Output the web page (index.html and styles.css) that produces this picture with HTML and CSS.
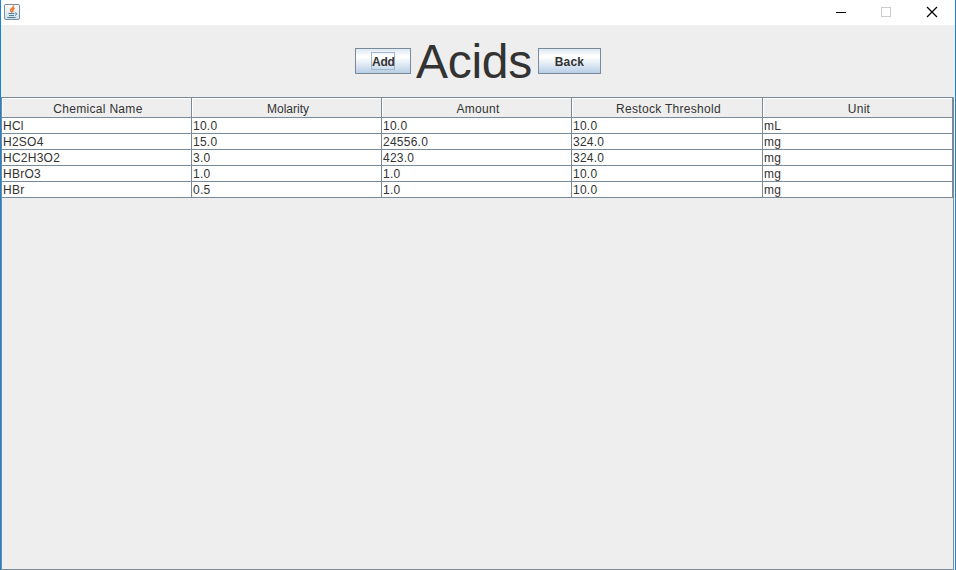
FILE: index.html
```html
<!DOCTYPE html>
<html lang="en">
<head>
<meta charset="utf-8">
<title>Acids</title>
<link rel="stylesheet" href="styles.css">
</head>
<body>
<div class="window">
  <header class="titlebar">
    <svg class="app-icon" width="16" height="16" viewBox="0 0 16 16">
      <defs><linearGradient id="tile" x2="0" y2="1"><stop stop-color="#fff"/><stop offset="1" stop-color="#cddde8"/></linearGradient></defs>
      <rect x=".5" y=".5" width="15" height="15" rx="1.5" fill="url(#tile)" stroke="#7b8f9f"/>
      <path d="M9.500 1.500C10 4 6 4.500 6.500 6.500L8 8.500M10.500 4C8 5.500 8.500 6.500 9 8" fill="none" stroke="#ed792b" stroke-width="1.500"/>
      <path d="M4.500 9.500H10.500M5 11.500H10M3.500 13.500H11.500M11 9C13.500 8.500 13 11 11 11.500" fill="none" stroke="#517f9e"/>
    </svg>
    <div class="controls">
      <svg width="46" height="25" viewBox="0 0 46 25"><path d="M17 12.500H27" stroke="#000"/></svg>
      <svg width="46" height="25" viewBox="0 0 46 25"><rect x="17.500" y="7.500" width="9" height="9" fill="none" stroke="#ccc"/></svg>
      <svg width="46" height="25" viewBox="0 0 46 25"><path d="M17 7L27 17M27 7L17 17" stroke="#000" stroke-width="1.200"/></svg>
    </div>
  </header>
  <div class="toolbar">
    <button class="button add"><span class="focus">Add</span></button>
    <h1 class="title">Acids</h1>
    <button class="button back">Back</button>
  </div>
  <main class="pane">
    <div class="grid head">
      <div>Chemical Name</div><div class="tight">Molarity</div><div>Amount</div><div>Restock Threshold</div><div>Unit</div>
    </div>
    <div class="grid row"><div>HCl</div><div>10.0</div><div>10.0</div><div>10.0</div><div>mL</div></div>
    <div class="grid row"><div>H2SO4</div><div>15.0</div><div>24556.0</div><div>324.0</div><div>mg</div></div>
    <div class="grid row"><div>HC2H3O2</div><div>3.0</div><div>423.0</div><div>324.0</div><div>mg</div></div>
    <div class="grid row"><div>HBrO3</div><div>1.0</div><div>1.0</div><div>10.0</div><div>mg</div></div>
    <div class="grid row"><div>HBr</div><div>0.5</div><div>1.0</div><div>10.0</div><div>mg</div></div>
  </main>
</div>
</body>
</html>
```
FILE: styles.css
```css
* { box-sizing: border-box; }
body { margin: 0; overflow: hidden; font: 12px "Liberation Sans", Arial, sans-serif; color: #333; }
.window {
  display: flex;
  flex-direction: column;
  width: 956px;
  height: 570px;
  background: #eee;
  border-left: 1px solid #1883d7;
  border-right: 1px solid #1883d7;
}
.titlebar {
  display: flex;
  justify-content: space-between;
  height: 25px;
  background: #fff;
}
.app-icon { margin: 4px 0 0 3px; }
.controls { display: flex; margin-right: -1px; }
.controls svg { display: block; }
.controls svg:first-child { margin-right: -1px; }
.toolbar {
  display: flex;
  justify-content: center;
  align-items: center;
  gap: 5px;
  height: 72px;
}
.button {
  display: flex;
  align-items: center;
  justify-content: center;
  height: 26px;
  padding: 2px 0 0;
  border: 1px solid #7a8a99;
  background: linear-gradient(#dde8f3 0%, #fff 30%, #fff 34%, #b8cfe5 100%);
  color: #333;
  font: bold 12px "Liberation Sans", Arial, sans-serif;
}
.add { width: 56px; padding: 0; letter-spacing: -.2px; }
.back { width: 63px; letter-spacing: .2px; }
.focus { height: 18px; width: 24px; border: 1px solid #a3b8cc; line-height: 18px; }
.title {
  width: 117px;
  margin: 0;
  padding-top: 2px;
  font-size: 48px;
  font-weight: 400;
  line-height: 56px;
  letter-spacing: -.3px;
}
.pane {
  flex: 1;
  margin-right: 1px;
  border: 1px solid #7a8a99;
  box-shadow: 1px 0 #fff;
  letter-spacing: .25px;
}
.grid {
  display: grid;
  grid-template-columns: 190px 190px 190px 191px 190px;
}
.grid div {
  border-right: 1px solid #7a8a99;
  border-bottom: 1px solid #7a8a99;
  white-space: nowrap;
}
.head div {
  height: 20px;
  padding-left: 3px;
  line-height: 22px;
  text-align: center;
  letter-spacing: .3px;
  box-shadow: inset 1px 1px #fff;
}
.head .tight { letter-spacing: 0; }
.row div {
  height: 16px;
  padding-left: 1px;
  line-height: 17px;
  background: #fff;
}
```
